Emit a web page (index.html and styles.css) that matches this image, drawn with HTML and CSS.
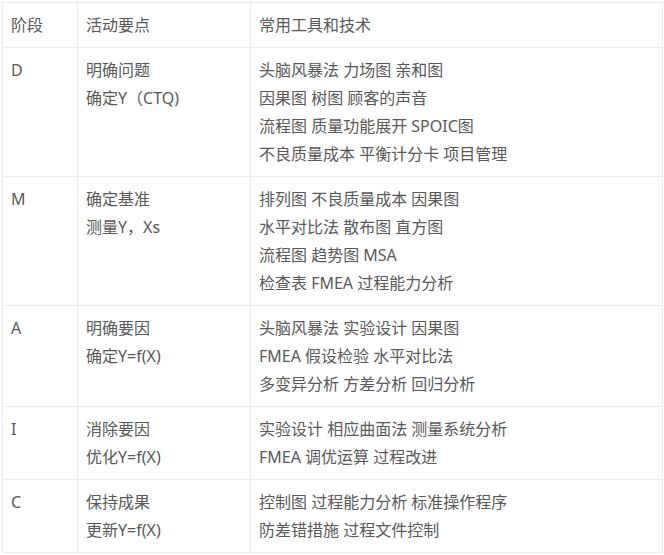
FILE: index.html
```html
<!DOCTYPE html>
<html lang="zh">
<head>
<meta charset="utf-8">
<link rel="stylesheet" href="styles.css">
</head>
<body>
<table class="dmaic">
  <colgroup>
    <col class="c1"><col class="c2"><col class="c3">
  </colgroup>
  <tr><td>阶段</td><td>活动要点</td><td>常用工具和技术</td></tr>
  <tr><td>D</td><td>明确问题<br>确定Y（CTQ)</td><td>头脑风暴法 力场图 亲和图<br>因果图 树图 顾客的声音<br>流程图 质量功能展开 SPOIC图<br>不良质量成本 平衡计分卡 项目管理</td></tr>
  <tr><td>M</td><td>确定基准<br>测量Y，Xs</td><td>排列图 不良质量成本 因果图<br>水平对比法 散布图 直方图<br>流程图 趋势图 MSA<br>检查表 FMEA 过程能力分析</td></tr>
  <tr><td>A</td><td>明确要因<br>确定Y=f(X)</td><td>头脑风暴法 实验设计 因果图<br>FMEA 假设检验 水平对比法<br>多变异分析 方差分析 回归分析</td></tr>
  <tr><td>I</td><td>消除要因<br>优化Y=f(X)</td><td>实验设计 相应曲面法 测量系统分析<br>FMEA 调优运算 过程改进</td></tr>
  <tr><td>C</td><td>保持成果<br>更新Y=f(X)</td><td>控制图 过程能力分析 标准操作程序<br>防差错措施 过程文件控制</td></tr>
</table>
</body>
</html>
```
FILE: styles.css
```css
html, body {
  margin: 0;
  background: #fff;
}
body {
  padding: 2px;
  font-family: "Noto Sans", "Noto Sans CJK SC", sans-serif;
  font-size: 16px;
  color: #595959;
}
.dmaic {
  border-collapse: collapse;
  width: 660px;
  table-layout: fixed;
}
.c1 { width: 75px; }
.c2 { width: 173px; }
.c3 { width: 412px; }
.dmaic td {
  border: 1px solid #ececec;
  padding: 8px 8px;
  line-height: 28px;
  vertical-align: top;
  white-space: nowrap;
}
```
